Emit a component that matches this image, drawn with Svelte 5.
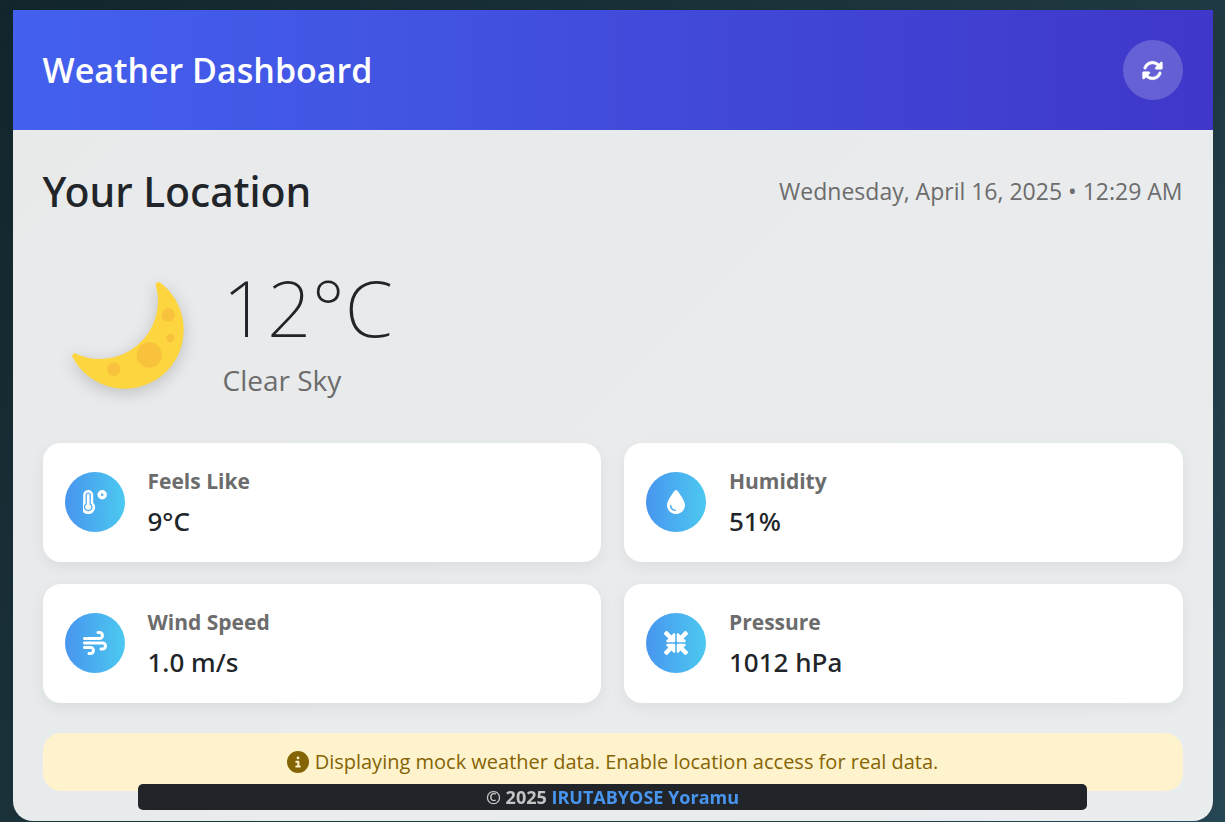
<script>
  const readings = [
    { icon: 'temperature', label: 'Feels Like', value: '9°C' },
    { icon: 'droplet', label: 'Humidity', value: '51%' },
    { icon: 'wind', label: 'Wind Speed', value: '1.0 m/s' },
    { icon: 'pressure', label: 'Pressure', value: '1012 hPa' }
  ];
  const arrow =
    'M439 7c9.4-9.4 24.6-9.4 33.9 0l32 32c9.4 9.4 9.4 24.6 0 33.9l-87 87 39 39c6.9 6.9 8.9 17.2 5.2 26.2s-12.5 14.8-22.2 14.8H296c-13.3 0-24-10.7-24-24V72c0-9.7 5.8-18.5 14.8-22.2s19.3-1.7 26.2 5.2l39 39L439 7z';
</script>

<main class="dashboard">
  <header>
    <h1>Weather Dashboard</h1>
    <button type="button" aria-label="Refresh">
      <svg viewBox="0 0 512 512" width="21" height="21" fill="currentColor" stroke="currentColor" stroke-width="14" aria-hidden="true">
        <path d="M142.9 142.9c62.2-62.2 162.7-62.5 225.3-1L327 183c-6.9 6.9-8.9 17.2-5.2 26.2s12.5 14.8 22.2 14.8H472c13.3 0 24-10.7 24-24V72c0-9.7-5.8-18.5-14.8-22.2s-19.3-1.7-26.2 5.2L413.4 96.6c-87.6-86.5-228.7-86.2-315.8 1C73.2 122 55.6 150.7 44.8 181.4c-5.9 16.7 2.9 34.9 19.5 40.8s34.9-2.9 40.8-19.5c7.7-21.8 20.2-42.3 37.8-59.8zM16 312V440c0 9.7 5.8 18.5 14.8 22.2s19.3 1.7 26.2-5.2l41.6-41.6c87.6 86.5 228.7 86.2 315.8-1c24.4-24.4 42.1-53.1 52.9-83.7c5.9-16.7-2.9-34.9-19.5-40.8s-34.9 2.9-40.8 19.5c-7.7 21.8-20.2 42.3-37.8 59.8c-62.2 62.2-162.7 62.5-225.3 1L185 329c6.9-6.9 8.9-17.2 5.2-26.2s-12.5-14.8-22.2-14.8H40c-13.3 0-24 10.7-24 24z" />
      </svg>
    </button>
  </header>

  <div class="content">
    <div class="place">
      <h2>Your Location</h2>
      <time datetime="2025-04-16T00:29">Wednesday, April 16, 2025 • 12:29 AM</time>
    </div>

    <section class="current">
      <svg class="moon" viewBox="0 0 150 150" width="150" height="150" aria-hidden="true">
        <path fill="#fdd53f" d="M118 23.2A59 59 0 1 1 29.3 96.8A2.6 2.6 0 0 1 33.5 94A58 58 0 0 0 113 26A2.9 2.9 0 0 1 118 23.2Z" />
        <g fill="#f9c23c">
          <circle cx="125.3" cy="55" r="6.7" />
          <circle cx="127.3" cy="78" r="4.2" />
          <circle cx="106.3" cy="95" r="12.7" />
          <circle cx="70.7" cy="109.3" r="6.7" />
        </g>
      </svg>
      <div>
        <p class="temperature">12°C</p>
        <p class="condition">Clear Sky</p>
      </div>
    </section>

    <section class="readings">
      {#each readings as reading}
        <article>
          <span class="badge">
            {#if reading.icon === 'temperature'}
              <svg viewBox="0 0 24 24" width="24" height="24" aria-hidden="true">
                <path fill="#fff" d="M0.2 5a5 5 0 0 1 10 0v7.6a6.9 6.9 0 1 1-10 0z" />
                <path fill="none" stroke="#4aa3ef" stroke-width="1.2" d="M3.2 5a2 2 0 0 1 4 0v8.9a3.7 3.7 0 1 1-4 0z" />
                <circle cx="19.2" cy="4.7" r="3" fill="none" stroke="#fff" stroke-width="3.4" />
              </svg>
            {:else if reading.icon === 'droplet'}
              <svg viewBox="0 0 384 512" width="24" height="24" fill="currentColor" aria-hidden="true">
                <path d="M192 512C86 512 0 426 0 320C0 228.8 130.2 57.7 166.6 11.7C172.6 4.2 181.5 0 191.1 0h1.8c9.6 0 18.5 4.2 24.5 11.7C253.8 57.7 384 228.8 384 320c0 106-86 192-192 192zM96 336c0-8.8-7.2-16-16-16s-16 7.2-16 16c0 61.9 50.1 112 112 112c8.8 0 16-7.2 16-16s-7.2-16-16-16c-44.2 0-80-35.8-80-80z" />
              </svg>
            {:else if reading.icon === 'wind'}
              <svg viewBox="0 0 512 512" width="24" height="24" fill="currentColor" aria-hidden="true">
                <path d="M288 32c0 17.7 14.3 32 32 32h32c17.7 0 32 14.3 32 32s-14.3 32-32 32H32c-17.7 0-32 14.3-32 32s14.3 32 32 32H352c53 0 96-43 96-96s-43-96-96-96H320c-17.7 0-32 14.3-32 32zm64 352c0 17.7 14.3 32 32 32h32c53 0 96-43 96-96s-43-96-96-96H32c-17.7 0-32 14.3-32 32s14.3 32 32 32H416c17.7 0 32 14.3 32 32s-14.3 32-32 32H384c-17.7 0-32 14.3-32 32zM128 512h32c53 0 96-43 96-96s-43-96-96-96H32c-17.7 0-32 14.3-32 32s14.3 32 32 32H160c17.7 0 32 14.3 32 32s-14.3 32-32 32H128c-17.7 0-32 14.3-32 32s14.3 32 32 32z" />
              </svg>
            {:else}
              <svg viewBox="0 0 512 512" width="24" height="24" fill="currentColor" aria-hidden="true">
                {#each [0, 90, 180, 270] as angle}
                  <path d={arrow} transform="rotate({angle} 256 256)" />
                {/each}
              </svg>
            {/if}
          </span>
          <div>
            <h3>{reading.label}</h3>
            <p>{reading.value}</p>
          </div>
        </article>
      {/each}
    </section>

    <p class="notice" role="status">
      <svg viewBox="0 0 512 512" width="22" height="22" fill="currentColor" aria-hidden="true">
        <path d="M256 512A256 256 0 1 0 256 0a256 256 0 1 0 0 512zM216 336h24V272H216c-13.3 0-24-10.7-24-24s10.7-24 24-24h48c13.3 0 24 10.7 24 24v88h8c13.3 0 24 10.7 24 24s-10.7 24-24 24H216c-13.3 0-24-10.7-24-24s10.7-24 24-24zm40-208a32 32 0 1 1 0 64 32 32 0 1 1 0-64z" />
      </svg>
      <span>Displaying mock weather data. Enable location access for real data.</span>
    </p>
  </div>
</main>

<footer>© 2025 <a href="#top">IRUTABYOSE Yoramu</a></footer>

<style>
  :global(html) {
    min-height: 100%;
    background: linear-gradient(135deg, #13262d 0%, #203a43 60%, #2c5364 130%);
  }
  :global(body) {
    margin: 0;
  }
  :global(#app) {
    font-family: 'Segoe UI', 'Open Sans', 'Noto Sans', sans-serif;
    color: #212529;
  }
  h1, h2, h3, p {
    margin: 0;
  }
  .dashboard {
    max-width: 1200px;
    margin: 10px auto 0;
    overflow: hidden;
    border-radius: 0 0 20px 20px;
    background: rgba(255, 255, 255, 0.9);
    box-shadow: 0 10px 30px rgba(0, 0, 0, 0.1);
  }
  header {
    display: flex;
    align-items: center;
    justify-content: space-between;
    padding: 30px;
    color: #fff;
    background: linear-gradient(90deg, #4361ee, #3f37c9);
  }
  h1 {
    font-size: 34px;
    line-height: 44px;
    font-weight: 600;
  }
  button {
    display: grid;
    place-items: center;
    width: 60px;
    height: 60px;
    padding: 0;
    border: 0;
    border-radius: 50%;
    color: #fff;
    background: rgba(255, 255, 255, 0.2);
    cursor: pointer;
  }
  .content {
    padding: 30px;
  }
  .place {
    display: flex;
    flex-wrap: wrap;
    align-items: center;
    justify-content: space-between;
    margin-bottom: 38px;
  }
  h2 {
    font-family: 'Segoe UI', 'Noto Sans', sans-serif;
    font-size: 41px;
    line-height: 62px;
    font-weight: 500;
  }
  time {
    font-size: 23px;
    line-height: 36px;
    color: #6c6c6c;
  }
  .current {
    display: flex;
    align-items: center;
    gap: 30px;
    margin-bottom: 33px;
  }
  .moon {
    filter: drop-shadow(0 4px 8px rgba(0, 0, 0, 0.18));
  }
  .temperature {
    margin-bottom: 12px;
    font-family: 'Segoe UI', 'Noto Sans', sans-serif;
    font-size: 78px;
    line-height: 78px;
    font-weight: 200;
  }
  .condition {
    font-size: 28px;
    line-height: 44px;
    color: #6c6c6c;
  }
  .readings {
    display: grid;
    grid-template-columns: repeat(2, 1fr);
    gap: 22px 23px;
    margin-bottom: 30px;
  }
  article {
    display: flex;
    align-items: center;
    gap: 23px;
    padding: 20px 22px 21px;
    border-radius: 18px;
    background: #fff;
    box-shadow: 0 5px 15px rgba(0, 0, 0, 0.06);
  }
  .badge {
    display: grid;
    place-items: center;
    width: 60px;
    height: 60px;
    border-radius: 50%;
    color: #fff;
    background: linear-gradient(90deg, #4895ef, #4cc9f0);
  }
  h3 {
    margin-bottom: 2px;
    font-size: 21px;
    line-height: 36px;
    font-weight: 700;
    color: #6c6c6c;
  }
  article p {
    font-family: 'Segoe UI', 'Noto Sans', sans-serif;
    font-size: 26px;
    line-height: 40px;
    font-weight: 500;
  }
  .notice {
    display: flex;
    align-items: center;
    justify-content: center;
    gap: 6px;
    padding: 12px 20px;
    border-radius: 18px;
    font-size: 20px;
    line-height: 34px;
    color: #856404;
    background: #fff3cd;
  }
  footer {
    position: fixed;
    right: 0;
    bottom: 12px;
    left: 0;
    width: 77.5%;
    margin: 0 auto;
    border-radius: 5px;
    font-size: 18px;
    line-height: 26px;
    font-weight: 700;
    text-align: center;
    color: #c4c4c4;
    background: #212529;
  }
  a {
    color: #4895ef;
    text-decoration: none;
  }
</style>
